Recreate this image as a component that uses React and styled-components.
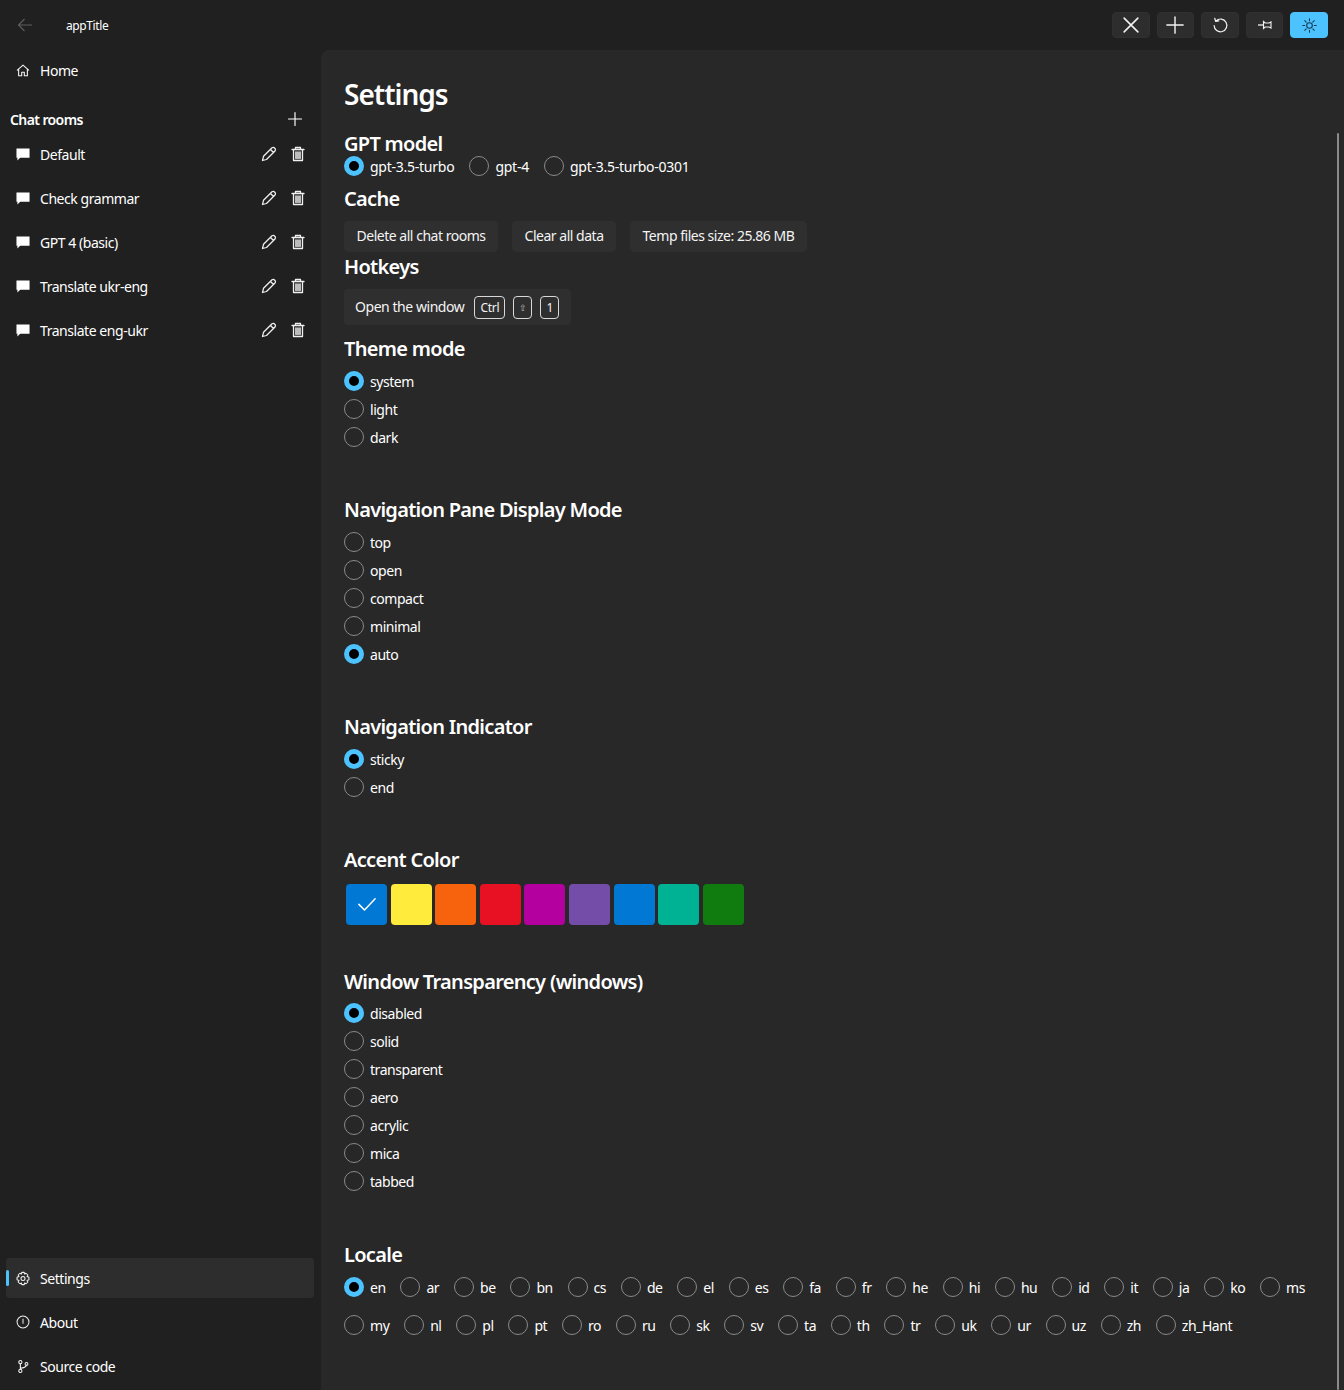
import React from 'react';
import styled, { createGlobalStyle } from 'styled-components';

const Global = createGlobalStyle`
  html, body { margin: 0; padding: 0; background: #202020; }
  * { box-sizing: border-box; }
  body { font-family: "Noto Sans", "Open Sans", "Liberation Sans", sans-serif; color: #fff; }
`;
const Shell = styled.div`
  width: 1344px; height: 1390px; display: flex; flex-direction: column;
  background: #202020; overflow: hidden; font-size: 14px; letter-spacing: -0.45px;
`;
const TitleBar = styled.header`
  height: 50px; flex: none; display: flex; align-items: center; padding: 0 16px 0 17px;
`;
const AppTitle = styled.span`
  font-size: 12px; margin-left: 33px; margin-top: 1px; letter-spacing: -0.4px;
`;
const ToolGroup = styled.div`
  margin-left: auto; display: flex; gap: 7px;
`;
const ToolButton = styled.button`
  width: 37.6px; height: 26px; padding: 0; display: flex; align-items: center; justify-content: center;
  border: 1px solid ${p => (p.$active ? '#4cc2ff' : '#303030')}; border-radius: 4px;
  background: ${p => (p.$active ? '#4cc2ff' : '#2d2d2d')};
  color: ${p => (p.$active ? '#10384d' : '#f2f2f2')};
`;
const Main = styled.div`
  flex: 1; display: flex; min-height: 0;
`;
const Sidebar = styled.nav`
  width: 321px; flex: none; display: flex; flex-direction: column; padding: 0 7px 4px 6px;
`;
const NavItem = styled.div`
  position: relative; height: 40px; flex: none; display: flex; align-items: center; padding: 0 10px;
  border-radius: 4px; color: #fff; background: ${p => (p.$active ? '#2d2d2d' : 'transparent')};
  & + & { margin-top: 4px; }
`;
const Indicator = styled.span`
  position: absolute; left: 0; top: 12px; width: 3px; height: 16px; border-radius: 2px; background: #4cc2ff;
`;
const NavIcon = styled.span`
  width: 14px; height: 16px; display: flex; align-items: center; justify-content: center; margin-right: 10px; color: #f2f2f2; flex: none;
`;
const NavLabel = styled.span`
  margin-top: 1px;
`;
const RowActions = styled.span`
  margin-left: auto; display: flex; gap: 13px; margin-right: -2px; color: #f0f0f0;
`;
const RoomsHeader = styled.div`
  height: 28px; margin-top: 15px; display: flex; align-items: center; justify-content: space-between;
  padding: 0 11px 0 4px; font-weight: 600; letter-spacing: -0.6px;
`;
const RoomsList = styled.div`
  display: flex; flex-direction: column; margin-top: 1px;
`;
const Spacer = styled.div`
  flex: 1;
`;
const Content = styled.main`
  flex: 1; position: relative; background: #282828; border-top-left-radius: 8px; padding: 26px 0 0 23px; overflow: hidden;
`;
const Scrollbar = styled.div`
  position: absolute; right: 5px; top: 83px; bottom: 0; width: 2px; border-radius: 1px; background: #8a8a8a;
`;
const PageTitle = styled.h1`
  margin: 0; font-size: 28px; line-height: 36px; font-weight: 600; letter-spacing: -1px;
`;
const Heading = styled.h2`
  margin: ${p => p.$mt ?? 0}px 0 0; font-size: 20px; line-height: 28px; font-weight: 600; letter-spacing: -0.7px;
`;
const RadioRow = styled.div`
  display: flex; align-items: center; gap: ${p => p.$gap ?? 15}px; height: ${p => p.$h ?? 20}px; margin-top: ${p => p.$mt ?? 0}px;
  letter-spacing: ${p => p.$ls ?? -0.45}px;
`;
const RadioColumn = styled.div`
  display: flex; flex-direction: column; margin-top: ${p => p.$mt ?? 4}px;
`;
const RadioItem = styled.label`
  display: inline-flex; align-items: center; gap: 6px; height: ${p => (p.$stack ? 28 : 20)}px; width: max-content;
`;
const Dot = styled.span`
  width: 20px; height: 20px; flex: none; border-radius: 50%; display: block;
  border: ${p => (p.$on ? '5px solid #4cc2ff' : '1px solid #8a8a8a')};
  background: ${p => (p.$on ? '#000' : '#272727')};
`;
const RadioText = styled.span`
  margin-top: 1px;
`;
const ButtonRow = styled.div`
  display: flex; gap: 14px; margin-top: 8px;
`;
const PlainButton = styled.button`
  height: 31px; padding: 0 11.5px 3px; border: 1px solid #2f2f2f; border-radius: 4px; background: #2f2f2f; color: #f4f4f4;
  font: inherit; letter-spacing: -0.48px; white-space: nowrap;
`;
const HotkeyBox = styled.div`
  width: 227px; height: 36px; margin-top: 8px; display: flex; align-items: center; padding: 0 11px; border-radius: 4px; background: #2f2f2f; color: #f4f4f4;
`;
const HotkeyText = styled.span`
  margin: -2px 10px 0 0; white-space: nowrap;
`;
const Key = styled.kbd`
  height: 23px; width: ${p => p.$w ?? 19}px; flex: none; margin-right: 8px; display: flex; align-items: center; justify-content: center;
  border: 1px solid #d8d8d8; border-radius: 4px; font: inherit; font-size: ${p => p.$fs ?? 12}px; color: ${p => p.$c ?? '#f4f4f4'}; letter-spacing: -0.3px;
`;
const SwatchRow = styled.div`
  display: flex; gap: 3.6px; margin: 10px 0 0 2px;
`;
const Swatch = styled.div`
  width: 41px; height: 41px; border-radius: 4px; background: ${p => p.$color}; display: flex; align-items: center; justify-content: center; color: #fff;
`;

const Radio = ({ label, on, stack }) => (
  <RadioItem $stack={stack}><Dot $on={on} /><RadioText>{label}</RadioText></RadioItem>
);
const RadioStack = ({ options, selected, mt }) => (
  <RadioColumn $mt={mt}>{options.map(o => <Radio key={o} label={o} on={o === selected} stack />)}</RadioColumn>
);

const Svg = ({ s = 16, w = 1.1, children }) => (
  <svg width={s} height={s} viewBox="0 0 16 16" fill="none" stroke="currentColor" strokeWidth={w} strokeLinecap="round" strokeLinejoin="round">{children}</svg>
);
const BackArrow = () => (
  <svg width="16" height="16" viewBox="0 0 16 16" fill="none" stroke="#5d5d5d" strokeWidth="1.1"><path d="M15 8 H1.5 M7.5 2 L1.5 8 L7.5 14" /></svg>
);
const HomeI = () => <Svg s={15} w={1.25}><path d="M1.5 7.5 L8 1.8 L14.5 7.5 M3 6.5 V14 H6.5 V10 H9.5 V14 H13 V6.5" /></Svg>;
const Bubble = () => (
  <svg width="15" height="15" viewBox="0 0 15 15" fill="#fff"><path d="M0.5 1 H14.5 V11 H4.5 L1.5 14 V11 H0.5 Z" /></svg>
);
const PencilI = () => <Svg s={16} w={1.25}><path d="M11 1.8 Q12.5 0.8 13.8 2.2 Q15 3.5 14 5 L5.5 13.5 L1.5 14.5 L2.5 10.3 Z M9.5 3.5 L12.5 6.5" /></Svg>;
const TrashI = () => <Svg s={16} w={1.3}><path d="M2 3.5 H14 M5.5 3.5 V1.5 H10.5 V3.5 M3.5 3.5 V14.5 H12.5 V3.5" /><path d="M6 6 V12.5 M8 6 V12.5 M10 6 V12.5" strokeWidth="1.5" /></Svg>;
const GearI = () => (
  <Svg s={15} w={1.15}>
    <circle cx="8" cy="8" r="2.3" />
    <path d="M6.6 1 H9.4 L9.8 2.9 L11.5 2 L13.6 4 L12.6 5.8 L14.8 6.5 V9.5 L12.6 10.2 L13.6 12 L11.5 14 L9.8 13.1 L9.4 15 H6.6 L6.2 13.1 L4.5 14 L2.4 12 L3.4 10.2 L1.2 9.5 V6.5 L3.4 5.8 L2.4 4 L4.5 2 L6.2 2.9 Z" />
  </Svg>
);
const InfoI = () => <Svg s={14} w={1.15}><circle cx="8" cy="8" r="6.8" /><path d="M8 4.5 V9.5" /></Svg>;
const BranchI = () => (
  <Svg s={15} w={1.25}><circle cx="5" cy="3" r="1.8" /><circle cx="5" cy="13" r="1.8" /><circle cx="12" cy="5" r="1.6" /><path d="M5 4.8 V11.2 M5 10 Q11 9.5 12 6.6" /></Svg>
);
const CloseI = () => <Svg s={20} w={1.25}><path d="M2.5 2.5 L13.5 13.5 M13.5 2.5 L2.5 13.5" /></Svg>;
const PlusI = ({ s = 20 }) => <Svg s={s} w={1.15}><path d="M8 1.5 V14.5 M1.5 8 H14.5" /></Svg>;
const RefreshI = () => <Svg s={17} w={1.15}><path d="M3.8 3.6 A6 6 0 1 1 2 8 M2.6 1.2 L3.4 4.2 L6.4 3.6" /></Svg>;
const PinI = () => (
  <svg width="16" height="14" viewBox="0 0 16 14" fill="none" stroke="currentColor" strokeWidth="1.1"><path d="M1 7 H6" strokeWidth="1.3" /><path d="M6.5 3.5 L8 5 H12 L14 4 V10 L12 9 H8 L6.5 10.5 Z" /></svg>
);
const SunI = () => (
  <Svg s={15} w={1.1}><circle cx="8" cy="8" r="3" /><path d="M8 0.8 V3 M8 13 V15.2 M0.8 8 H3 M13 8 H15.2 M2.9 2.9 L4.5 4.5 M11.5 11.5 L13.1 13.1 M13.1 2.9 L11.5 4.5 M4.5 11.5 L2.9 13.1" /></Svg>
);
const CheckI = () => <Svg s={20} w={1.2}><path d="M1.5 7.5 L6 12 L14.5 3" /></Svg>;

const rooms = ['Default', 'Check grammar', 'GPT 4 (basic)', 'Translate ukr-eng', 'Translate eng-ukr'];
const colors = ['#0078d4', '#ffeb3b', '#f7630c', '#e81123', '#b4009e', '#744da9', '#0078d4', '#00b294', '#107c10'];
const row1 = ['en','ar','be','bn','cs','de','el','es','fa','fr','he','hi','hu','id','it','ja','ko','ms'];
const row2 = ['my','nl','pl','pt','ro','ru','sk','sv','ta','th','tr','uk','ur','uz','zh','zh_Hant'];

export default function App() {
  return (
    <Shell>
      <Global />
      <TitleBar>
        <BackArrow />
        <AppTitle>appTitle</AppTitle>
        <ToolGroup>
          <ToolButton><CloseI /></ToolButton>
          <ToolButton><PlusI /></ToolButton>
          <ToolButton><RefreshI /></ToolButton>
          <ToolButton><PinI /></ToolButton>
          <ToolButton $active><SunI /></ToolButton>
        </ToolGroup>
      </TitleBar>
      <Main>
        <Sidebar>
          <NavItem>
            <NavIcon><HomeI /></NavIcon>
            <NavLabel>Home</NavLabel>
          </NavItem>
          <RoomsHeader>Chat rooms<PlusI s={16} /></RoomsHeader>
          <RoomsList>
            {rooms.map(r => (
              <NavItem key={r}>
                <NavIcon><Bubble /></NavIcon>
                <NavLabel>{r}</NavLabel>
                <RowActions><PencilI /><TrashI /></RowActions>
              </NavItem>
            ))}
          </RoomsList>
          <Spacer />
          <NavItem $active>
            <Indicator />
            <NavIcon><GearI /></NavIcon>
            <NavLabel>Settings</NavLabel>
          </NavItem>
          <NavItem>
            <NavIcon><InfoI /></NavIcon>
            <NavLabel>About</NavLabel>
          </NavItem>
          <NavItem>
            <NavIcon><BranchI /></NavIcon>
            <NavLabel>Source code</NavLabel>
          </NavItem>
        </Sidebar>
        <Content>
          <Scrollbar />
          <PageTitle>Settings</PageTitle>
          <Heading $mt={18}>GPT model</Heading>
          <RadioRow $mt={-2} $ls={-0.25}>
            <Radio label="gpt-3.5-turbo" on /><Radio label="gpt-4" /><Radio label="gpt-3.5-turbo-0301" />
          </RadioRow>
          <Heading $mt={9}>Cache</Heading>
          <ButtonRow>
            <PlainButton>Delete all chat rooms</PlainButton>
            <PlainButton>Clear all data</PlainButton>
            <PlainButton>Temp files size: 25.86 MB</PlainButton>
          </ButtonRow>
          <Heading $mt={1}>Hotkeys</Heading>
          <HotkeyBox>
            <HotkeyText>Open the window</HotkeyText>
            <Key $w={31}>Ctrl</Key><Key $fs={9} $c="#bdbdbd">⇧</Key><Key>1</Key>
          </HotkeyBox>
          <Heading $mt={10}>Theme mode</Heading>
          <RadioStack options={['system', 'light', 'dark']} selected="system" />
          <Heading $mt={45}>Navigation Pane Display Mode</Heading>
          <RadioStack options={['top', 'open', 'compact', 'minimal', 'auto']} selected="auto" />
          <Heading $mt={45}>Navigation Indicator</Heading>
          <RadioStack options={['sticky', 'end']} selected="sticky" />
          <Heading $mt={45}>Accent Color</Heading>
          <SwatchRow>
            {colors.map((c, i) => (
              <Swatch key={i} $color={c}>{i === 0 && <CheckI />}</Swatch>
            ))}
          </SwatchRow>
          <Heading $mt={43}>Window Transparency (windows)</Heading>
          <RadioStack mt={3} options={['disabled', 'solid', 'transparent', 'aero', 'acrylic', 'mica', 'tabbed']} selected="disabled" />
          <Heading $mt={46}>Locale</Heading>
          <RadioRow $h={38} $mt={-1} $gap={14.8}>{row1.map(l => <Radio key={l} label={l} on={l === 'en'} />)}</RadioRow>
          <RadioRow $h={38} $gap={14.8}>{row2.map(l => <Radio key={l} label={l} />)}</RadioRow>
        </Content>
      </Main>
    </Shell>
  );
}
